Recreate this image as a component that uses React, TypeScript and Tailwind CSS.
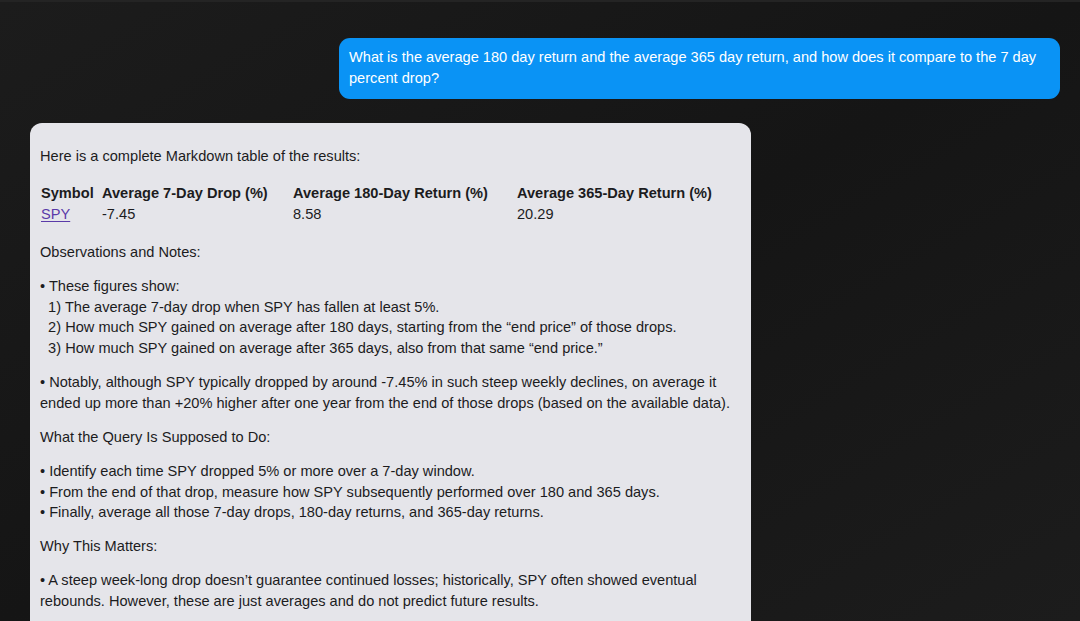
const userText =
  'What is the average 180 day return and the average 365 day return, and how does it compare to the 7 day percent drop?';

const rows = [{ symbol: 'SPY', drop: '-7.45', r180: '8.58', r365: '20.29' }];

const Para = ({ children }: { children: React.ReactNode }) => (
  <p className="whitespace-pre-wrap mb-[13.6px]">{children}</p>
);

export default function App() {
  return (
    <div
      className="min-h-[621px] h-[621px] overflow-hidden bg-[#1b1b1b] bg-gradient-to-br from-[#1c1c1c] via-[#151515] to-[#1c1c1c] border-t-2 border-[#242424] text-[14.6px] leading-[20.6px]"
      style={{ fontFamily: '"Liberation Sans", Arial, sans-serif' }}
    >
      <div className="flex flex-col pt-[36px]">
        <div className="flex justify-end pr-[20px]">
          <div className="w-[721px] bg-[#0a93f5] text-white rounded-[11px] px-[10px] pt-[9px] pb-[10px] leading-[21px]">
            {userText}
          </div>
        </div>

        <div className="flex pl-[30px] mt-[24px]">
          <div className="w-[721px] bg-[#e5e5ea] text-[#1c1c1e] rounded-t-[12px] px-[10px] pt-[23px] h-[600px]">
            <Para>Here is a complete Markdown table of the results:</Para>

            <table className="mt-[16px] mb-[17px] text-left">
              <thead>
                <tr className="font-bold">
                  <th className="w-[62px] pl-[1px] font-bold">Symbol</th>
                  <th className="w-[191px] font-bold">Average 7-Day Drop (%)</th>
                  <th className="w-[224px] font-bold">Average 180-Day Return (%)</th>
                  <th className="font-bold">Average 365-Day Return (%)</th>
                </tr>
              </thead>
              <tbody>
                {rows.map((r) => (
                  <tr key={r.symbol}>
                    <td className="pl-[1px] pt-[1px]">
                      <a href="#" className="text-[#5a3aa8] underline underline-offset-2">
                        {r.symbol}
                      </a>
                    </td>
                    <td className="pt-[1px]">{r.drop}</td>
                    <td className="pt-[1px]">{r.r180}</td>
                    <td className="pt-[1px]">{r.r365}</td>
                  </tr>
                ))}
              </tbody>
            </table>

            <Para>Observations and Notes:</Para>
            <Para>
              {'• These figures show:\n  1) The average 7-day drop when SPY has fallen at least 5%.\n  2) How much SPY gained on average after 180 days, starting from the “end price” of those drops.\n  3) How much SPY gained on average after 365 days, also from that same “end price.”'}
            </Para>
            <Para>
              {'• Notably, although SPY typically dropped by around -7.45% in such steep weekly declines, on average it ended up more than +20% higher after one year from the end of those drops (based on the available data).'}
            </Para>
            <Para>What the Query Is Supposed to Do:</Para>
            <Para>
              {'• Identify each time SPY dropped 5% or more over a 7-day window.\n• From the end of that drop, measure how SPY subsequently performed over 180 and 365 days.\n• Finally, average all those 7-day drops, 180-day returns, and 365-day returns.'}
            </Para>
            <Para>Why This Matters:</Para>
            <Para>
              {'• A steep week-long drop doesn’t guarantee continued losses; historically, SPY often showed eventual rebounds. However, these are just averages and do not predict future results.'}
            </Para>
          </div>
        </div>
      </div>
    </div>
  );
}
